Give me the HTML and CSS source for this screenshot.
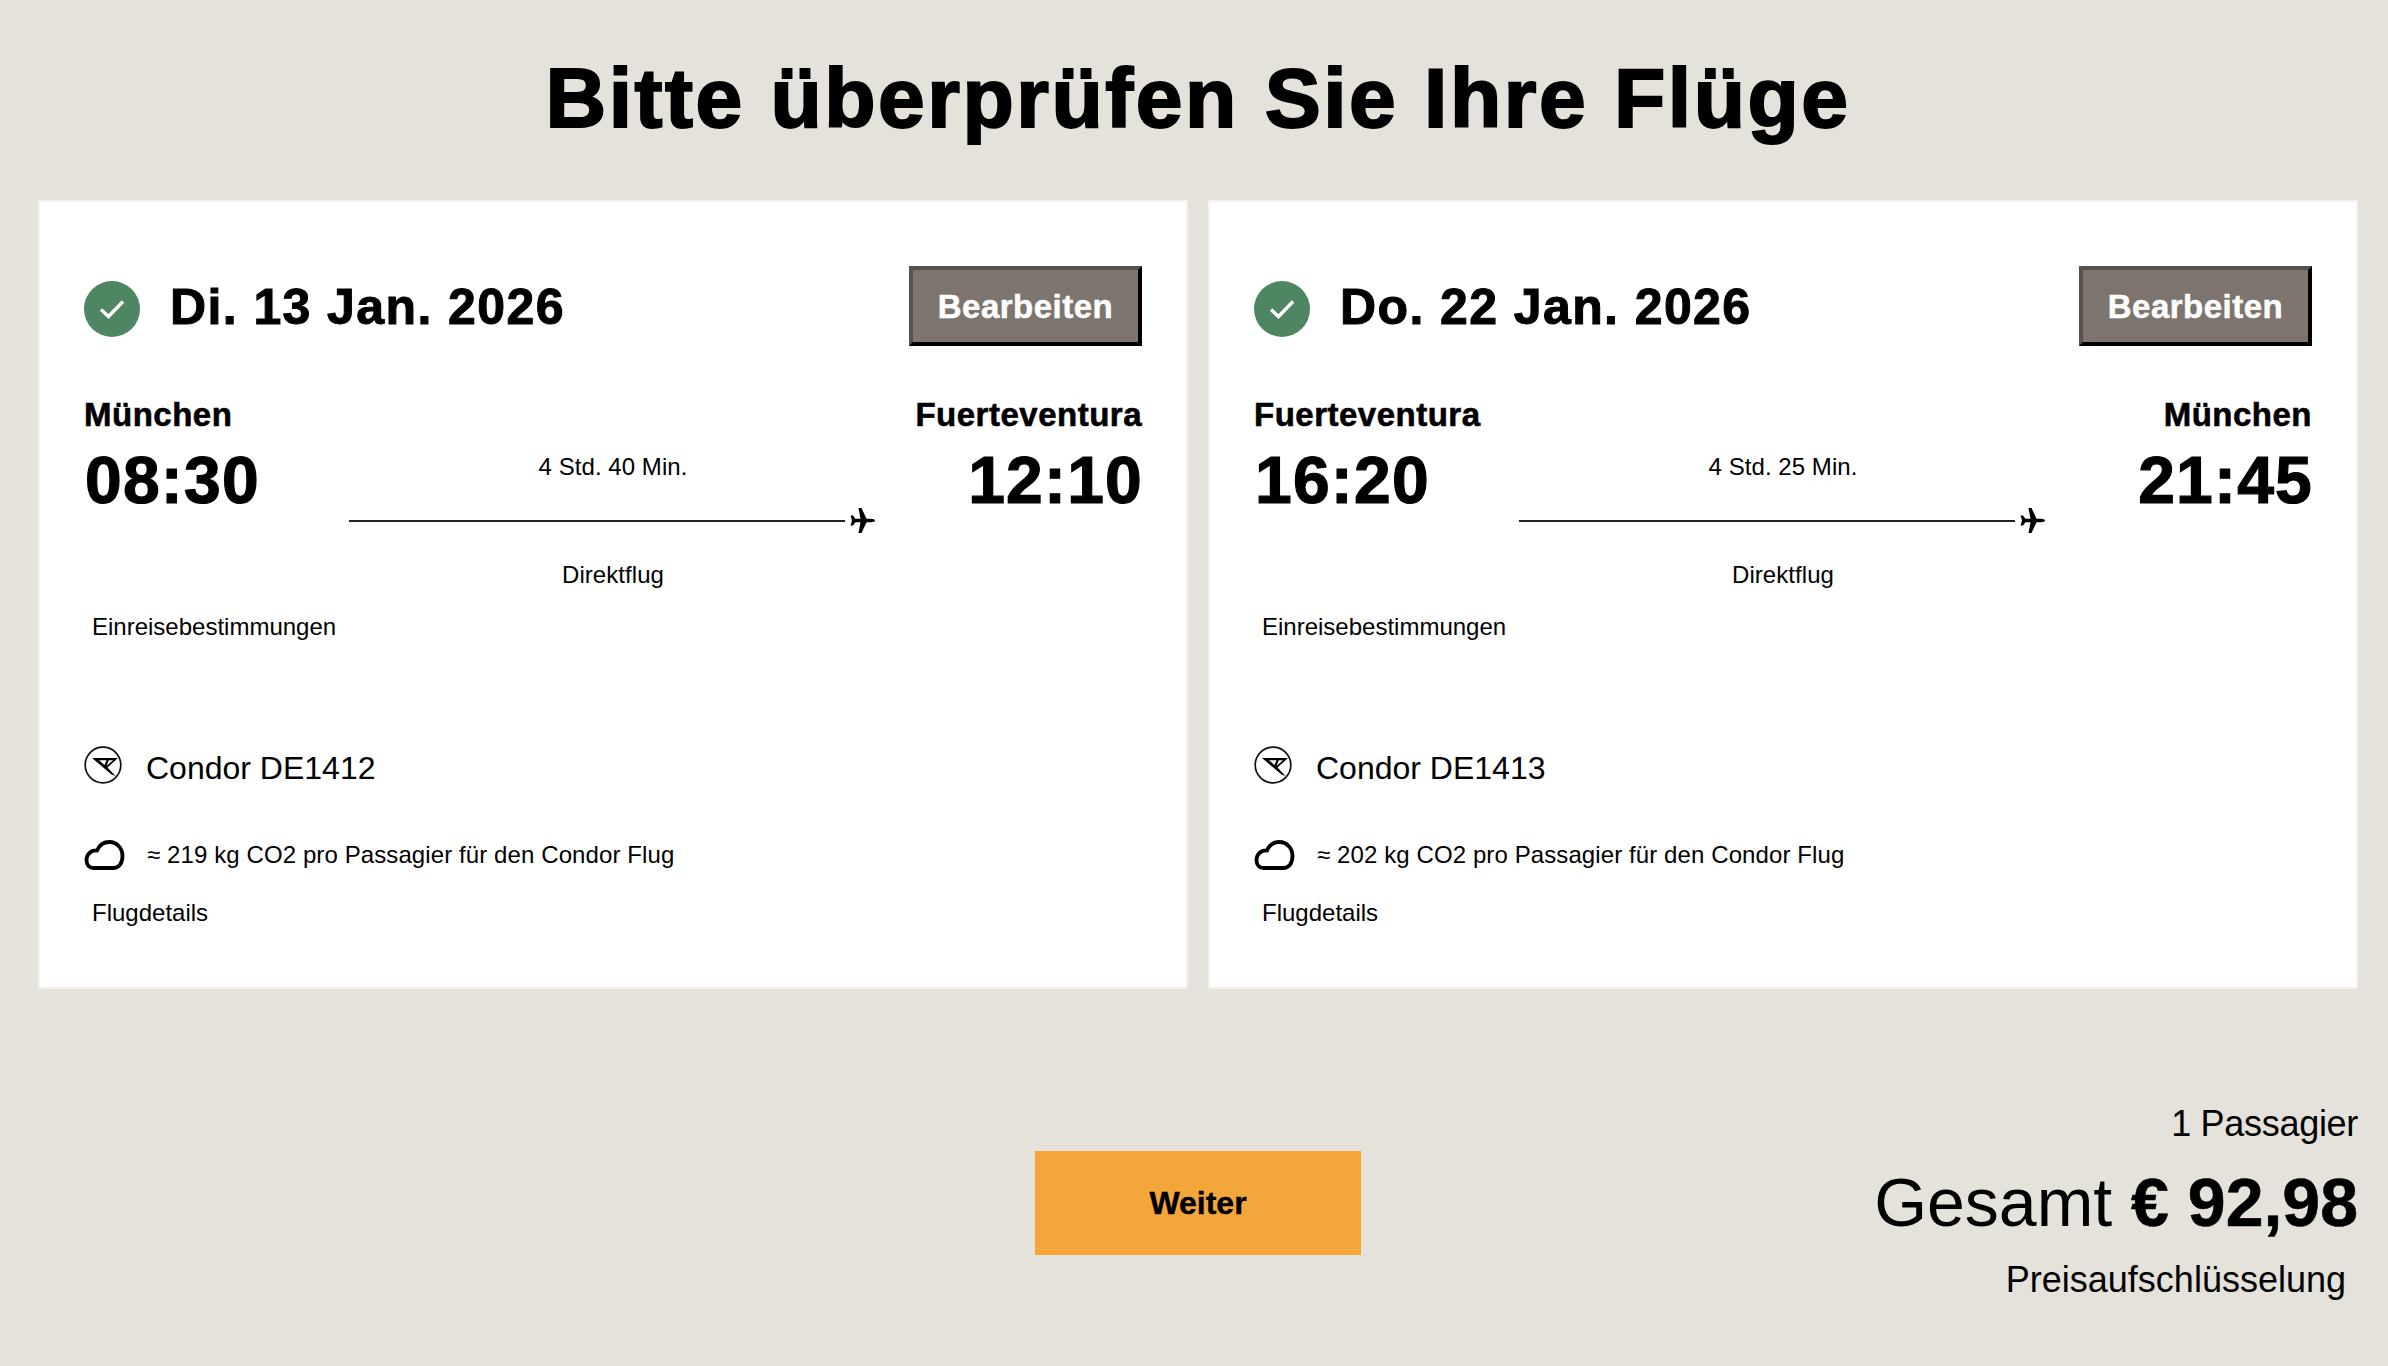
FILE: index.html
```html
<!DOCTYPE html>
<html lang="de">
<head>
<meta charset="utf-8">
<title>Flüge</title>
<link rel="stylesheet" href="styles.css">
</head>
<body>
<main class="page">
  <h1 class="title">Bitte überprüfen Sie Ihre Flüge</h1>
  <div class="cards">
    <section class="card">
      <header class="card-head">
        <div class="date-wrap">
          <svg class="check" viewBox="0 0 56 56"><circle cx="28" cy="28" r="28" fill="#4d8661"/><path d="M17 28.5 L24.5 35.5 L39 20.5" fill="none" stroke="#fff" stroke-width="3.4"/></svg>
          <span class="date">Di. 13 Jan. 2026</span>
        </div>
        <button class="edit">Bearbeiten</button>
      </header>
      <div class="route">
        <div class="end"><div class="city">München</div><div class="time">08:30</div></div>
        <div class="mid">
          <div class="small mid-text">4 Std. 40 Min.</div>
          <div class="track"><span class="line"></span><svg class="plane" viewBox="0 0 25 25"><path d="M25 12.5C25 11.5 23 10.8 21 10.8H16.500L11.500 0H8.500L10.500 10.800H5.500L3 7.500H.5L2 12.500L.5 17.500H3L5.500 14.200H10.500L8.500 25H11.500L16.500 14.200H21C23 14.200 25 13.500 25 12.500Z"/></svg></div>
          <div class="small mid-text direct">Direktflug</div>
        </div>
        <div class="end right"><div class="city">Fuerteventura</div><div class="time">12:10</div></div>
      </div>
      <div class="small link entry">Einreisebestimmungen</div>
      <div class="carrier">
        <svg class="logo" viewBox="0 0 38 38"><circle cx="19" cy="19" r="17.8" fill="none" stroke="#111" stroke-width="1.7"/><path d="M8 12H34L23.500 21.500L31.500 30L27.500 28.500L8 12ZM15 14.200L20.500 19L22.500 14.200ZM24.800 14.200L22.500 20L29 14.200Z" fill="#000" fill-rule="evenodd"/></svg>
        <span class="carrier-name">Condor DE1412</span>
      </div>
      <div class="co2">
        <svg class="cloud" viewBox="0 0 40 30"><path d="M9 28H29C34.500 28 38 23 38 16C38 8 32 2 25 2C19 2 14.500 5.500 12.500 10.500C6 10 2 15 2 20C2 25 5 28 9 28Z" fill="none" stroke="#000" stroke-width="3.800"/></svg>
        <span class="small co2-text">≈ 219 kg CO2 pro Passagier für den Condor Flug</span>
      </div>
      <div class="small link details">Flugdetails</div>
    </section>
    <section class="card">
      <header class="card-head">
        <div class="date-wrap">
          <svg class="check" viewBox="0 0 56 56"><circle cx="28" cy="28" r="28" fill="#4d8661"/><path d="M17 28.5 L24.5 35.5 L39 20.5" fill="none" stroke="#fff" stroke-width="3.4"/></svg>
          <span class="date">Do. 22 Jan. 2026</span>
        </div>
        <button class="edit">Bearbeiten</button>
      </header>
      <div class="route">
        <div class="end"><div class="city">Fuerteventura</div><div class="time">16:20</div></div>
        <div class="mid">
          <div class="small mid-text">4 Std. 25 Min.</div>
          <div class="track"><span class="line"></span><svg class="plane" viewBox="0 0 25 25"><path d="M25 12.5C25 11.5 23 10.8 21 10.8H16.500L11.500 0H8.500L10.500 10.800H5.500L3 7.500H.5L2 12.500L.5 17.500H3L5.500 14.200H10.500L8.500 25H11.500L16.500 14.200H21C23 14.200 25 13.500 25 12.500Z"/></svg></div>
          <div class="small mid-text direct">Direktflug</div>
        </div>
        <div class="end right"><div class="city">München</div><div class="time">21:45</div></div>
      </div>
      <div class="small link entry">Einreisebestimmungen</div>
      <div class="carrier">
        <svg class="logo" viewBox="0 0 38 38"><circle cx="19" cy="19" r="17.8" fill="none" stroke="#111" stroke-width="1.7"/><path d="M8 12H34L23.500 21.500L31.500 30L27.500 28.500L8 12ZM15 14.200L20.500 19L22.500 14.200ZM24.800 14.200L22.500 20L29 14.200Z" fill="#000" fill-rule="evenodd"/></svg>
        <span class="carrier-name">Condor DE1413</span>
      </div>
      <div class="co2">
        <svg class="cloud" viewBox="0 0 40 30"><path d="M9 28H29C34.500 28 38 23 38 16C38 8 32 2 25 2C19 2 14.500 5.500 12.500 10.500C6 10 2 15 2 20C2 25 5 28 9 28Z" fill="none" stroke="#000" stroke-width="3.800"/></svg>
        <span class="small co2-text">≈ 202 kg CO2 pro Passagier für den Condor Flug</span>
      </div>
      <div class="small link details">Flugdetails</div>
    </section>
  </div>
  <footer class="foot">
    <div class="foot-side"></div>
    <button class="next">Weiter</button>
    <div class="foot-side summary">
      <div class="pax">1 Passagier</div>
      <div class="total">Gesamt <b class="amount">€ 92,98</b></div>
      <div class="breakdown">Preisaufschlüsselung</div>
    </div>
  </footer>
</main>
</body>
</html>
```
FILE: styles.css
```css
* { box-sizing: border-box; }
html, body { margin: 0; height: 100%; }
body {
  background: #e5e2db;
  color: #000;
  font-family: "Liberation Sans", Arial, sans-serif;
}
.page { padding: 0 30px 0 38px; }
.title {
  margin: 0;
  height: 200px;
  padding-top: 48px;
  font-size: 84px;
  line-height: 100px;
  font-weight: 700;
  text-align: center;
  letter-spacing: 2.5px;
  -webkit-text-stroke: 2px #000;
}
.cards { display: grid; grid-template-columns: 1150px 1150px; gap: 20px; }
.card {
  height: 789px;
  padding: 64px 44px 0;
  background: #fff;
  border: 2px solid #f3f2ee;
}
.card-head { display: flex; justify-content: space-between; align-items: center; height: 80px; }
.date-wrap { display: flex; align-items: center; gap: 30px; padding-top: 6px; }
.check { width: 56px; height: 56px; display: block; }
.date { margin-top: -4px; font-size: 50px; font-weight: 700; letter-spacing: 1.4px; -webkit-text-stroke: 1px #000; }
.edit {
  width: 233px;
  height: 80px;
  padding: 2px 0 0;
  background: #7d746d;
  color: #fff;
  font: 700 33px "Liberation Sans", Arial, sans-serif;
  letter-spacing: .5px;
  -webkit-text-stroke: .5px #fff;
  border: 4px solid;
  border-color: #55524f #000 #000 #55524f;
}
.route { display: grid; grid-template-columns: 265px 526px 267px; margin-top: 50px; }
.city { font-size: 33px; line-height: 38px; font-weight: 700; letter-spacing: .5px; -webkit-text-stroke: .6px #000; }
.time { margin: 9px -1px 0 1px; font-size: 66px; line-height: 74px; font-weight: 700; letter-spacing: 1.2px; -webkit-text-stroke: 1.2px #000; }
.right { text-align: right; }
.mid { padding-top: 57px; text-align: center; }
.mid-text { padding-left: 2px; letter-spacing: .05px; }
.small { font-size: 24px; line-height: 28px; }
.track { display: flex; align-items: center; gap: 5px; height: 25px; margin-top: 27px; }
.line { flex: 1; height: 2px; background: #222; }
.plane { width: 25px; height: 25px; display: block; fill: #000; }
.direct { margin-top: 28px; }
.link { padding-left: 8px; }
.entry { margin-top: 24px; }
.carrier { display: flex; align-items: center; gap: 24px; margin-top: 104px; height: 46px; }
.logo { width: 38px; height: 38px; display: block; transform: translateY(-3px); }
.carrier-name { font-size: 32px; line-height: 46px; }
.co2 { display: flex; align-items: center; gap: 22px; margin-top: 49px; height: 30px; }
.co2-text { letter-spacing: .1px; }
.cloud { width: 41px; height: 30px; display: block; }
.details { margin-top: 29px; }
.foot { display: grid; grid-template-columns: 1fr 326px 1fr; }
.next {
  align-self: start;
  height: 104px;
  margin-top: 162px;
  padding: 0;
  border: 0;
  background: #f4a63b;
  color: #000;
  font: 700 32px "Liberation Sans", Arial, sans-serif;
  -webkit-text-stroke: .4px #000;
}
.summary { text-align: right; padding-top: 113px; }
.pax { font-size: 36px; line-height: 44px; letter-spacing: -.3px; }
.total { margin-top: 16px; font-size: 68px; line-height: 80px; }
.amount { -webkit-text-stroke: .6px #000; }
.breakdown { margin-top: 16px; padding-right: 12px; font-size: 36px; line-height: 44px; }
```
